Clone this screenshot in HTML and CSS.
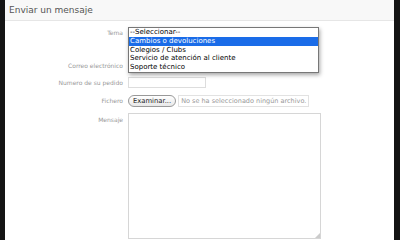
FILE: index.html
```html
<!DOCTYPE html>
<html lang="es">
<head>
    <meta charset="UTF-8">
    <meta name="viewport" content="width=device-width, initial-scale=1.0">
    <title>Enviar un mensaje</title>
    <link rel="stylesheet" href="styles.css">
</head>
<body>
    <div class="page">
        <h3 class="page-heading">Enviar un mensaje</h3>

        <form class="contact-form">
            <div class="form-row row-tema">
                <label class="form-label">Tema</label>
                <div class="field">
                    <div class="select-box">--Seleccionar--</div>
                    <ul class="select-list">
                        <li>--Seleccionar--</li>
                        <li class="active">Cambios o devoluciones</li>
                        <li>Colegios / Clubs</li>
                        <li>Servicio de atención al cliente</li>
                        <li>Soporte técnico</li>
                    </ul>
                </div>
            </div>

            <div class="form-row row-email">
                <label class="form-label">Correo electrónico</label>
                <div class="field"><input class="text-input" type="text"></div>
            </div>

            <div class="form-row">
                <label class="form-label">Numero de su pedido</label>
                <div class="field"><input class="text-input" type="text"></div>
            </div>

            <div class="form-row row-file">
                <label class="form-label">Fichero</label>
                <div class="field file-field">
                    <span class="file-button">Examinar...</span>
                    <span class="file-name">No se ha seleccionado ningún archivo.</span>
                </div>
            </div>

            <div class="form-row row-message">
                <label class="form-label">Mensaje</label>
                <div class="field"><div class="message-box"><span class="grip"></span></div></div>
            </div>
        </form>
    </div>
</body>
</html>
```

FILE: styles.css
```css
body {
    margin: 0;
    background: #141414;
    font-family: "DejaVu Sans", Verdana, sans-serif;
    height: 240px;
    overflow: hidden;
}

.page {
    margin: 0 6px 0 5px;
    background: #fff;
    height: 240px;
}

.page-heading {
    margin: 0;
    height: 20px;
    line-height: 20px;
    padding-left: 4px;
    background: #f8f8f8;
    border-bottom: 1px solid #e6e6e6;
    font-size: 9px;
    font-weight: normal;
    color: #555;
}

.contact-form {
    padding-top: 6px;
}

.form-row {
    display: grid;
    grid-template-columns: 118px 1fr;
    column-gap: 5px;
    margin-bottom: 6px;
}

.form-label {
    text-align: right;
    font-size: 6px;
    color: #999;
    line-height: 11px;
}

.field {
    position: relative;
}

.row-tema {
    margin-bottom: 22px;
}

.select-box {
    width: 188px;
    height: 9px;
    border: 1px solid #aaa;
    font-size: 7px;
    line-height: 9px;
    padding-left: 1px;
    color: #000;
}

.select-list {
    position: absolute;
    z-index: 2;
    top: 0;
    left: 0;
    width: 189px;
    margin: 0;
    padding: 0;
    list-style: none;
    background: #fff;
    border: 1px solid #777;
    box-shadow: 1px 2px 4px rgba(0, 0, 0, 0.35);
    font-size: 7px;
    color: #000;
}

.select-list li {
    height: 8.8px;
    line-height: 8.8px;
    padding-left: 1px;
    white-space: nowrap;
}

.select-list li.active {
    background: #1a6ce8;
    color: #fff;
}

.text-input {
    display: block;
    box-sizing: border-box;
    width: 78px;
    height: 11px;
    margin: 0;
    border: 1px solid #ddd;
    padding: 0;
}

.row-email .text-input {
    width: 188px;
}

.file-field {
    display: flex;
    align-items: center;
    gap: 2px;
    height: 13px;
}

.row-file .form-label {
    line-height: 13px;
}

.file-button {
    box-sizing: border-box;
    height: 12px;
    padding: 0 4px;
    border: 1px solid #999;
    border-radius: 6px;
    background: linear-gradient(#fff, #e8e8e8);
    font-size: 6.8px;
    line-height: 10px;
    color: #222;
}

.file-name {
    box-sizing: border-box;
    height: 12px;
    padding: 0 2px;
    border: 1px solid #e2e2e2;
    font-size: 6.5px;
    line-height: 10px;
    color: #999;
}

.row-message .form-label {
    padding-top: 1px;
}

.message-box {
    position: relative;
    box-sizing: border-box;
    width: 193px;
    height: 126px;
    border: 1px solid #d6d6d6;
    background: #fff;
}

.grip {
    position: absolute;
    right: 0;
    bottom: 0;
    width: 0;
    height: 0;
    border-left: 5px solid transparent;
    border-bottom: 5px solid #ccc;
}
```
